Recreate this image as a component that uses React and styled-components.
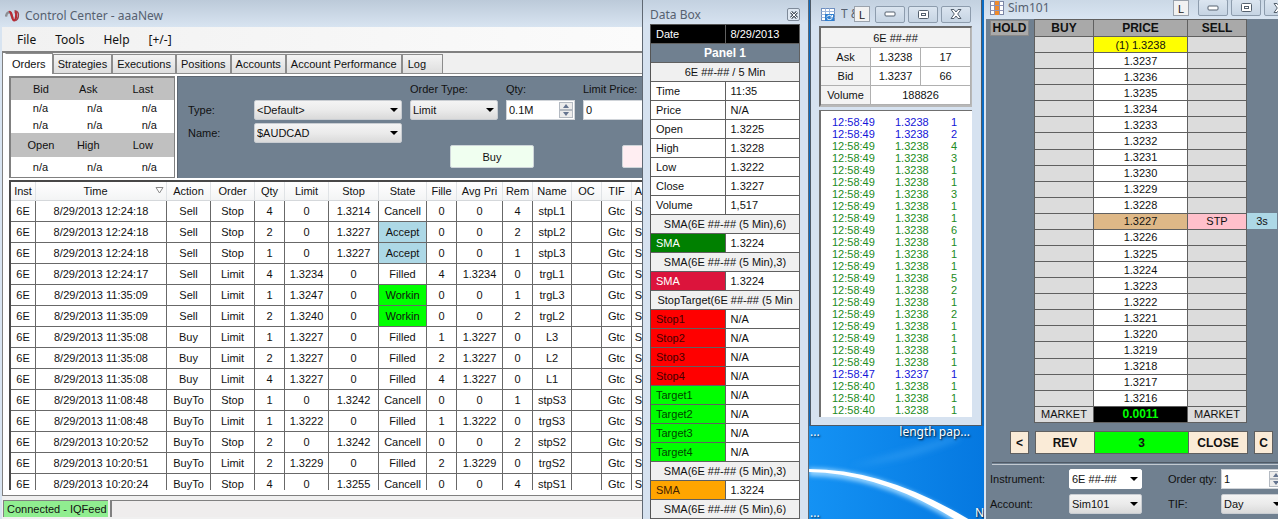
import styled, { createGlobalStyle } from "styled-components";

const columns = [
  ["Inst", 25],
  ["Time", 131],
  ["Action", 44],
  ["Order", 44],
  ["Qty", 30],
  ["Limit", 44],
  ["Stop", 50],
  ["State", 48],
  ["Fille", 30],
  ["Avg Pri", 46],
  ["Rem", 30],
  ["Name", 39],
  ["OC", 30],
  ["TIF", 30],
];

const orders = [
  ["12:24:18", "Sell", "Stop", "4", "0", "1.3214", "Cancell", "0", "0", "4", "stpL1"],
  ["12:24:18", "Sell", "Stop", "2", "0", "1.3227", "Accept", "0", "0", "2", "stpL2"],
  ["12:24:18", "Sell", "Stop", "1", "0", "1.3227", "Accept", "0", "0", "1", "stpL3"],
  ["12:24:17", "Sell", "Limit", "4", "1.3234", "0", "Filled", "4", "1.3234", "0", "trgL1"],
  ["11:35:09", "Sell", "Limit", "1", "1.3247", "0", "Workin", "0", "0", "1", "trgL3"],
  ["11:35:09", "Sell", "Limit", "2", "1.3240", "0", "Workin", "0", "0", "2", "trgL2"],
  ["11:35:08", "Buy", "Limit", "1", "1.3227", "0", "Filled", "1", "1.3227", "0", "L3"],
  ["11:35:08", "Buy", "Limit", "2", "1.3227", "0", "Filled", "2", "1.3227", "0", "L2"],
  ["11:35:08", "Buy", "Limit", "4", "1.3227", "0", "Filled", "4", "1.3227", "0", "L1"],
  ["11:08:48", "BuyTo", "Stop", "1", "0", "1.3242", "Cancell", "0", "0", "1", "stpS3"],
  ["11:08:48", "BuyTo", "Limit", "1", "1.3222", "0", "Filled", "1", "1.3222", "0", "trgS3"],
  ["10:20:52", "BuyTo", "Stop", "2", "0", "1.3242", "Cancell", "0", "0", "2", "stpS2"],
  ["10:20:51", "BuyTo", "Limit", "2", "1.3229", "0", "Filled", "2", "1.3229", "0", "trgS2"],
  ["10:20:24", "BuyTo", "Stop", "4", "0", "1.3255", "Cancell", "0", "0", "4", "stpS1"],
];

const stateColors = { Accept: "#add8e6", Workin: "#00ff00" };

const tabs = ["Strategies", "Executions", "Positions", "Accounts", "Account Performance"];

const dataRows = [
  { label: "Date", value: "8/29/2013", bg: "#000", color: "#fff", valueBg: "#000" },
  { title: "Panel 1", panel: true },
  { title: "6E ##-## / 5 Min" },
  { label: "Time", value: "11:35" },
  { label: "Price", value: "N/A" },
  { label: "Open", value: "1.3225" },
  { label: "High", value: "1.3228" },
  { label: "Low", value: "1.3222" },
  { label: "Close", value: "1.3227" },
  { label: "Volume", value: "1,517" },
  { title: "SMA(6E ##-## (5 Min),6)" },
  { label: "SMA", value: "1.3224", bg: "#008000", color: "#fff" },
  { title: "SMA(6E ##-## (5 Min),3)" },
  { label: "SMA", value: "1.3224", bg: "#dc143c", color: "#fff" },
  { title: "StopTarget(6E ##-## (5 Min" },
  { label: "Stop1", value: "N/A", bg: "#ff0000", color: "#400" },
  { label: "Stop2", value: "N/A", bg: "#ff0000", color: "#400" },
  { label: "Stop3", value: "N/A", bg: "#ff0000", color: "#400" },
  { label: "Stop4", value: "N/A", bg: "#ff0000", color: "#400" },
  { label: "Target1", value: "N/A", bg: "#00ff00", color: "#040" },
  { label: "Target2", value: "N/A", bg: "#00ff00", color: "#040" },
  { label: "Target3", value: "N/A", bg: "#00ff00", color: "#040" },
  { label: "Target4", value: "N/A", bg: "#00ff00", color: "#040" },
  { title: "SMA(6E ##-## (5 Min),3)" },
  { label: "SMA", value: "1.3224", bg: "#ffa500", color: "#420" },
  { title: "SMA(6E ##-## (5 Min),6)" },
];

const sizes = [1, 2, 4, 3, 1, 1, 3, 1, 1, 6, 1, 1, 1, 5, 2, 1, 2, 1, 1, 1, 1, 1, 1, 1, 1];
const prints = sizes.map((size, i) => ({
  time: i < 21 ? "12:58:49" : i === 21 ? "12:58:47" : "12:58:40",
  price: i === 21 ? "1.3237" : "1.3238",
  size,
  bid: i < 2 || i === 21,
}));

const ladder = Array.from({ length: 23 }, (_, i) => (1.3238 - i / 10000).toFixed(4));

const Logo = () => (
  <svg width="15" height="14" viewBox="0 0 15 14" fill="none">
    <path d="M1 7.5C1.5 3 5 1.500 6.300 5.500L7.600 9.500" stroke="#8d8f94" strokeWidth="2.400" />
    <path d="M4 3C5.800 2.200 6.400 5 7.200 8C8.200 12.500 10.300 12.500 11 8C11.400 5 11 3 9.800 2.600" stroke="#b92a35" strokeWidth="2.200" />
    <path d="M9.500 2C12.500 1.500 14 4.500 13.300 7.500C13 9.500 12 11 10.500 11.500" stroke="#9c3f48" strokeWidth="1.500" />
  </svg>
);

const TapeIcon = () => (
  <svg width="14" height="15" viewBox="0 0 14 15">
    <rect x="0.500" y="1.500" width="13" height="12" fill="#fff" stroke="#6f8fc0" />
    <path d="M0.500 4.500H13.500M0.500 7.500H13.500M0.500 10.500H13.500M4.500 1.500V13.500M8.500 1.500V13.500" stroke="#9db6dc" />
    <path d="M4 7H13V14H4Z" fill="#2f7fd0" />
    <path d="M5.500 10C7 8 10 8 11 9.500M11.500 11C10 13 7 13 6 11.500M11.500 8V10H9.500" stroke="#fff" fill="none" />
  </svg>
);

const LadderIcon = () => (
  <svg width="14" height="14" viewBox="0 0 14 14">
    <rect x="0.500" y="0.500" width="13" height="13" fill="#fff" stroke="#7b86a5" />
    <rect x="5" y="0" width="4" height="14" fill="#ef8b2c" />
    <path d="M0.500 4.500H13.500M0.500 9.500H13.500M4.500 0V14M9.500 0V14" stroke="#8e93b5" fill="none" />
  </svg>
);

const MinIcon = () => (
  <svg width="12" height="6" viewBox="0 0 12 6">
    <rect x="1" y="1" width="10" height="4" rx="1" fill="#fff" stroke="#54606e" />
  </svg>
);

const MaxIcon = () => (
  <svg width="11" height="9" viewBox="0 0 11 9">
    <rect x="0.500" y="0.500" width="10" height="8" rx="1" fill="#fff" stroke="#54606e" />
    <rect x="3.500" y="3.500" width="4" height="2" fill="#fff" stroke="#54606e" />
  </svg>
);

const CloseIcon = () => (
  <svg width="12" height="10" viewBox="0 0 12 10">
    <path
      d="M1 0.500H4L6 3L8 0.500H11L7.700 5L11 9.500H8L6 7L4 9.500H1L4.300 5Z"
      fill="#fff"
      stroke="#54606e"
    />
  </svg>
);

const Stepper = ({ name }) => (
  <StepButtons>
    <StepButton aria-label={`${name} up`}>
      <svg width="6" height="4" viewBox="0 0 6 4">
        <path d="M0 4L3 0L6 4Z" fill="#64748f" />
      </svg>
    </StepButton>
    <StepButton aria-label={`${name} down`}>
      <svg width="6" height="4" viewBox="0 0 6 4">
        <path d="M0 0L3 4L6 0Z" fill="#64748f" />
      </svg>
    </StepButton>
  </StepButtons>
);

const Combo = ({ id, value, flat }) => (
  <ComboBox $flat={flat}>
    <select id={id} defaultValue={value}>
      <option>{value}</option>
    </select>
    <svg width="8" height="4" viewBox="0 0 8 4">
      <path d="M0 0H8L4 4Z" fill="#000" />
    </svg>
  </ComboBox>
);

const WindowButtons = () => (
  <>
    <CaptionButton aria-label="Minimize">
      <MinIcon />
    </CaptionButton>
    <CaptionButton aria-label="Maximize">
      <MaxIcon />
    </CaptionButton>
    <CaptionButton aria-label="Close">
      <CloseIcon />
    </CaptionButton>
  </>
);

const ControlCenter = () => (
  <ControlWindow>
    <ControlTitle>
      <Logo />
      <span>Control Center - aaaNew</span>
    </ControlTitle>
    <MenuBar>
      <MenuButton>File</MenuButton>
      <MenuButton>Tools</MenuButton>
      <MenuButton>Help</MenuButton>
      <MenuButton>[+/-]</MenuButton>
    </MenuBar>
    <ControlBody>
      <TabStrip role="tablist">
        <Tab role="tab" $active>
          Orders
        </Tab>
        {tabs.map((name) => (
          <Tab role="tab" key={name}>
            {name}
          </Tab>
        ))}
        <Tab role="tab" $wide>
          Log
        </Tab>
      </TabStrip>
      <EntryRow>
        <QuoteTable>
          <thead>
            <tr>
              <th>Bid</th>
              <th>Ask</th>
              <th>Last</th>
            </tr>
          </thead>
          <tbody>
            <QuoteRow $h={16}>
              <td>n/a</td>
              <td>n/a</td>
              <td>n/a</td>
            </QuoteRow>
            <QuoteRow $h={16}>
              <td>n/a</td>
              <td>n/a</td>
              <td>n/a</td>
            </QuoteRow>
            <tr>
              <th>Open</th>
              <th>High</th>
              <th>Low</th>
            </tr>
            <QuoteRow $h={20}>
              <td>n/a</td>
              <td>n/a</td>
              <td>n/a</td>
            </QuoteRow>
          </tbody>
        </QuoteTable>
        <OrderEntry>
          <EntryFields>
            <i />
            <i />
            <label htmlFor="orderType">Order Type:</label>
            <label htmlFor="qty">Qty:</label>
            <label htmlFor="limitPrice">Limit Price:</label>
            <label htmlFor="type">Type:</label>
            <Combo id="type" value="<Default>" />
            <Combo id="orderType" value="Limit" />
            <NumberBox>
              <input id="qty" defaultValue="0.1M" />
              <Stepper name="Qty" />
            </NumberBox>
            <NumberBox>
              <input id="limitPrice" defaultValue="0" />
            </NumberBox>
            <label htmlFor="name">Name:</label>
            <Combo id="name" value="$AUDCAD" />
          </EntryFields>
          <TradeButtons>
            <TradeButton $bg="#f0fff0">Buy</TradeButton>
            <TradeButton $bg="#ffeef2" aria-label="Sell" />
          </TradeButtons>
        </OrderEntry>
      </EntryRow>
      <GridFrame>
        <OrderGrid>
          <colgroup>
            {columns.map(([name, width]) => (
              <col key={name} width={width} />
            ))}
            <col />
          </colgroup>
          <thead>
            <tr>
              {columns.map(([name]) => (
                <th key={name}>
                  {name === "Time" && (
                    <SortMark width="9" height="7" viewBox="0 0 9 7">
                      <path d="M1 0.500H8L4.500 6Z" fill="#fff" stroke="#888" />
                    </SortMark>
                  )}
                  {name}
                </th>
              ))}
              <LastHead>A</LastHead>
            </tr>
          </thead>
          <tbody>
            {orders.map((row) => (
              <tr key={row[10] + row[0]}>
                <td>6E</td>
                <td>8/29/2013 {row[0]}</td>
                {row.slice(1).map((cell, i) => (
                  <Cell key={i} $bg={i === 5 ? stateColors[cell] : undefined}>
                    {cell}
                  </Cell>
                ))}
                <td />
                <td>Gtc</td>
                <LastCell>S</LastCell>
              </tr>
            ))}
          </tbody>
        </OrderGrid>
      </GridFrame>
    </ControlBody>
    <StatusBar>
      <Connected>Connected - IQFeed</Connected>
      <StatusRest />
    </StatusBar>
  </ControlWindow>
);

const DataBox = () => (
  <DataWindow>
    <DataTitle>
      <span>Data Box</span>
      <SmallClose aria-label="Close data box">
        <svg width="8" height="8" viewBox="0 0 8 8">
          <path d="M1 1L7 7M7 1L1 7" stroke="#4c5663" strokeWidth="3" />
          <path d="M1 1L7 7M7 1L1 7" stroke="#fff" strokeWidth="1" />
        </svg>
      </SmallClose>
    </DataTitle>
    <DataTable>
      <tbody>
        {dataRows.map((row, i) =>
          row.title ? (
            <tr key={i}>
              <DataHeading colSpan={2} $panel={row.panel}>
                {row.title}
              </DataHeading>
            </tr>
          ) : (
            <tr key={i}>
              <DataCell $bg={row.bg} $color={row.color}>
                {row.label}
              </DataCell>
              <DataCell $bg={row.valueBg} $color={row.valueBg && row.color}>
                {row.value}
              </DataCell>
            </tr>
          )
        )}
      </tbody>
    </DataTable>
  </DataWindow>
);

const TimeAndSales = () => (
  <TapeWindow>
    <TapeTitle>
      <TapeIcon />
      <span>T &amp;</span>
      <LinkButton>L</LinkButton>
      <WindowButtons />
    </TapeTitle>
    <TapeQuote>
      <tbody>
        <tr>
          <th colSpan={3}>6E ##-##</th>
        </tr>
        <tr>
          <th>Ask</th>
          <td>1.3238</td>
          <td>17</td>
        </tr>
        <tr>
          <th>Bid</th>
          <td>1.3237</td>
          <td>66</td>
        </tr>
        <tr>
          <th>Volume</th>
          <td colSpan={2}>188826</td>
        </tr>
      </tbody>
    </TapeQuote>
    <TapeList>
      {prints.map((p, i) => (
        <Print key={i} $bid={p.bid}>
          <span>{p.time}</span>
          <span>{p.price}</span>
          <span>{p.size}</span>
        </Print>
      ))}
    </TapeList>
  </TapeWindow>
);

const Wallpaper = () => (
  <Desk>
    <svg width="100%" height="100%" viewBox="0 0 175 93" preserveAspectRatio="none">
      <defs>
        <filter id="glow" x="-10%" y="-30%" width="120%" height="160%">
          <feGaussianBlur stdDeviation="2" />
        </filter>
        <filter id="haze" x="-10%" y="-30%" width="120%" height="160%">
          <feGaussianBlur stdDeviation="3" />
        </filter>
      </defs>
      <path d="M40 40C80 30 115 18 150 8V14C120 26 90 36 40 40Z" fill="#4fb0fa" opacity="0.35" filter="url(#haze)" />
      <path d="M0 46C55 46 110 68 162 102" stroke="#8fd0ff" strokeWidth="8" fill="none" filter="url(#glow)" />
      <path d="M0 45C55 46 110 68 158 100L164 97C110 64 55 44 0 44Z" fill="#fff" stroke="#fff" strokeWidth="2" />
    </svg>
    <DeskLabels>
      <span>...</span>
      <DeskName>length pap...</DeskName>
      <span>...</span>
      <DeskEnd>N</DeskEnd>
    </DeskLabels>
  </Desk>
);

const Dom = () => (
  <DomWindow>
    <DomTitle>
      <LadderIcon />
      <DomName>Sim101</DomName>
      <LinkButton>L</LinkButton>
      <DomCaption>
        <WindowButtons />
      </DomCaption>
    </DomTitle>
    <DomBody>
      <LadderRow>
        <HoldButton>HOLD</HoldButton>
        <Ladder>
          <colgroup>
            <col width="59" />
            <col width="94" />
            <col width="59" />
            <col width="31" />
          </colgroup>
          <thead>
            <tr>
              <th>BUY</th>
              <th>PRICE</th>
              <th>SELL</th>
              <Outside />
            </tr>
          </thead>
          <tbody>
            {ladder.map((price, i) => {
              const entry = price === "1.3227";
              return (
                <tr key={price}>
                  <td />
                  <LadderCell $bg={i === 0 ? "#ffff00" : entry ? "#deb887" : "#fff"}>
                    {i === 0 ? `(1) ${price}` : price}
                  </LadderCell>
                  {entry ? <LadderCell $bg="#ffc0cb">STP</LadderCell> : <td />}
                  <Outside $bg={entry ? "#add8e6" : undefined}>{entry && "3s"}</Outside>
                </tr>
              );
            })}
            <tr>
              <td>MARKET</td>
              <Profit>0.0011</Profit>
              <td>MARKET</td>
              <Outside />
            </tr>
          </tbody>
        </Ladder>
      </LadderRow>
      <ActionRow>
        <ActionButton $w={19}>&lt;</ActionButton>
        <ActionGroup>
          <ActionButton $w={60}>REV</ActionButton>
          <ActionButton $w={95} $bg="#00ff00">
            3
          </ActionButton>
          <ActionButton $w={60}>CLOSE</ActionButton>
        </ActionGroup>
        <ActionButton $w={19}>C</ActionButton>
      </ActionRow>
      <Divider />
      <DomFields>
        <label htmlFor="instrument">Instrument:</label>
        <Combo id="instrument" value="6E ##-##" flat />
        <label htmlFor="orderQty">Order qty:</label>
        <NumberBox>
          <input id="orderQty" defaultValue="1" />
          <Stepper name="Order qty" />
        </NumberBox>
        <label htmlFor="account">Account:</label>
        <Combo id="account" value="Sim101" />
        <label htmlFor="tif">TIF:</label>
        <Combo id="tif" value="Day" />
      </DomFields>
    </DomBody>
  </DomWindow>
);

const App = () => (
  <>
    <GlobalStyle />
    <Desktop>
      <ControlCenter />
      <DataBox />
      <DeskColumn>
        <TimeAndSales />
        <Wallpaper />
      </DeskColumn>
      <Dom />
    </Desktop>
  </>
);

const GlobalStyle = createGlobalStyle`
  * {
    box-sizing: border-box;
  }

  body {
    margin: 0;
    overflow: hidden;
    background: #0a84e8;
    color: #111;
    font-family: "Liberation Sans", Arial, sans-serif;
    font-size: 11px;
  }

  button,
  input,
  select {
    font: inherit;
    color: inherit;
    margin: 0;
    padding: 0;
    border: none;
    border-radius: 0;
    background: none;
    appearance: none;
    outline: none;
  }

  table {
    border-collapse: collapse;
    table-layout: fixed;
  }

  th,
  td {
    padding: 0;
    font-weight: normal;
    text-align: center;
    white-space: nowrap;
    overflow: hidden;
  }

  svg {
    display: block;
    flex-shrink: 0;
  }
`;

const Desktop = styled.main`
  display: grid;
  grid-template-columns: minmax(0, 1fr) 167px 175px 294px;
  grid-template-rows: minmax(0, 1fr);
  height: 100vh;
  overflow: hidden;
`;

const TitleBar = styled.header`
  display: flex;
  align-items: center;
  flex-shrink: 0;
  font-family: "Noto Sans", "Open Sans", sans-serif;
  font-size: 12px;
  line-height: 16px;
  color: #566170;
  white-space: nowrap;
`;

const ControlWindow = styled.section`
  display: flex;
  flex-direction: column;
  min-width: 0;
  overflow: hidden;
  padding-left: 2px;
  background: linear-gradient(#bccad9, #d8e4f1 27px);
`;

const ControlTitle = styled(TitleBar)`
  height: 27px;
  gap: 5px;
  padding: 5px 3px 0;
`;

const MenuBar = styled.nav`
  display: flex;
  flex-shrink: 0;
  gap: 19px;
  height: 24px;
  padding-left: 15px;
  background: linear-gradient(90deg, #f1f1f1, #fbfbfb);
`;

const MenuButton = styled.button`
  font-family: "Noto Sans", "Open Sans", sans-serif;
  font-size: 12px;
`;

const ControlBody = styled.div`
  display: flex;
  flex-direction: column;
  flex: 1;
  min-height: 0;
  border: solid #808080;
  border-width: 2px 0 1px 1px;
  background: #fff;
  padding: 0 0 5px 2px;
`;

const TabStrip = styled.div`
  display: flex;
  align-items: flex-end;
  flex-shrink: 0;
  height: 21px;
  margin-bottom: 2px;
  background: #f0f0f0;
  border-bottom: 1px solid #8c8c8c;
`;

const Tab = styled.button`
  height: ${(p) => (p.$active ? 21 : 19)}px;
  padding: ${(p) => (p.$wide ? "0 16px 0 5px" : p.$active ? "0 6px" : "0 4px")};
  margin-bottom: ${(p) => (p.$active ? -1 : 0)}px;
  border: 1px solid #8c8c8c;
  border-left-color: ${(p) => (p.$active ? "#fff" : "#8c8c8c")};
  border-bottom: none;
  background: ${(p) => (p.$active ? "#fff" : "linear-gradient(#f4f4f4, #dedede)")};
  font-size: 11px;
  white-space: nowrap;
`;

const EntryRow = styled.div`
  display: flex;
  flex-shrink: 0;
  gap: 2px;
  height: 102px;
  padding-left: 4px;
  background: #fff;
`;

const QuoteTable = styled.table`
  width: 166px;
  height: 102px;
  flex-shrink: 0;
  border: solid #808080;
  border-width: 2px 1px 1px 2px;

  th {
    height: 23px;
    background: #c0c0c0;
    padding-left: 6px;
  }

  th + th {
    padding: 0 8px 0 0;
  }

  td {
    padding-left: 5px;
  }
`;

const QuoteRow = styled.tr`
  height: ${(p) => p.$h}px;
`;

const OrderEntry = styled.div`
  flex: 1;
  min-width: 0;
  overflow: hidden;
  background: #708090;
  border-top: 1px solid #5c6672;
  border-left: 1px solid #5c6672;
  padding-left: 10px;
`;

const EntryFields = styled.div`
  display: grid;
  grid-template-columns: 58px 148px 88px 69px 90px;
  grid-template-rows: 23px 20px 25px;
  column-gap: 8px;
  align-items: center;

  label {
    white-space: nowrap;
  }
`;

const ComboBox = styled.div`
  display: grid;
  align-items: center;
  height: 20px;
  border: 1px solid ${(p) => (p.$flat ? "#fff" : "#c9cdd2")};
  border-radius: 2px;
  background: ${(p) => (p.$flat ? "#fff" : "linear-gradient(#f4f4f4, #ebebeb 50%, #dadada)")};

  select,
  svg {
    grid-area: 1 / 1;
  }

  select {
    width: 100%;
    height: 18px;
    padding: 0 0 0 2px;
  }

  svg {
    justify-self: end;
    margin-right: 3px;
    pointer-events: none;
  }
`;

const NumberBox = styled.div`
  display: flex;
  align-items: center;
  height: 20px;
  background: #fff;
  border: 1px solid #d0d4d9;
  padding: 1px;

  input {
    flex: 1;
    min-width: 0;
    height: 16px;
    padding: 0 1px;
  }
`;

const StepButtons = styled.div`
  display: flex;
  flex-direction: column;
  flex-shrink: 0;
  width: 14px;
`;

const StepButton = styled.button`
  display: grid;
  place-items: center;
  height: 8px;
  border: 1px solid #b4bac2;
  background: #ececec;
`;

const TradeButtons = styled.div`
  display: flex;
  gap: 88px;
  padding-left: 262px;
`;

const TradeButton = styled.button`
  flex-shrink: 0;
  width: 84px;
  height: 23px;
  border: 1px solid #cfd6da;
  border-radius: 2px;
  background: ${(p) => p.$bg};
`;

const GridFrame = styled.div`
  flex: 1;
  min-height: 0;
  overflow: hidden;
  margin: 2px 0 0 4px;
  border: solid #484848;
  border-width: 2px 0 0 2px;
`;

const OrderGrid = styled.table`
  width: 100%;
  border-collapse: separate;
  border-spacing: 0;

  th {
    height: 19px;
    background: linear-gradient(#fff, #f3f4f5);
    border-right: 1px solid #e0e3e6;
    border-bottom: 1px solid #d5d8db;
  }

  td {
    height: 21px;
    border-right: 1px solid #686868;
    border-bottom: 1px solid #686868;
  }

  th:last-child,
  td:last-child {
    border-right: none;
  }
`;

const SortMark = styled.svg`
  float: right;
  margin: 2px 2px 0 0;
`;

const Cell = styled.td`
  background: ${(p) => p.$bg || "#fff"};
`;

const LastHead = styled.th`
  && {
    text-align: right;
  }
`;

const LastCell = styled.td`
  && {
    text-align: right;
  }
`;

const StatusBar = styled.footer`
  display: flex;
  flex-shrink: 0;
  gap: 2px;
  height: 23px;
  padding: 4px 0 2px 1px;
  background: #f0f0f0;
`;

const Connected = styled.div`
  width: 105px;
  padding-left: 3px;
  border: solid #808080;
  border-width: 1px 0 0 1px;
  background: #90ee90;
  line-height: 16px;
`;

const StatusRest = styled.div`
  flex: 1;
  border: solid #808080;
  border-width: 1px 0 0 2px;
  background: #efeded;
`;

const DataWindow = styled.section`
  overflow: hidden;
  padding: 0 8px 0 7px;
  border: solid #5f6873;
  border-width: 0 1px;
  background: linear-gradient(#c3d1e0, #d6e2f0 24px);
`;

const DataTitle = styled(TitleBar)`
  justify-content: space-between;
  height: 24px;
  padding-top: 5px;
`;

const SmallClose = styled.button`
  display: grid;
  place-items: center;
  width: 13px;
  height: 13px;
  border: 1px solid #7e8a99;
  border-radius: 2px;
  background: #dfe8f2;
`;

const DataTable = styled.table`
  width: 100%;
  border-collapse: separate;
  border-spacing: 0;
  border: solid #555;
  border-width: 1px 0 0 1px;
`;

const DataCell = styled.td`
  height: 19px;
  padding-left: 5px;
  text-align: left;
  border-right: 1px solid #606060;
  border-bottom: 1px solid #606060;
  background: ${(p) => p.$bg || "#fff"};
  color: ${(p) => p.$color || "#111"};
`;

const DataHeading = styled.th`
  height: 19px;
  border-right: 1px solid #606060;
  border-bottom: 1px solid #606060;
  background: ${(p) => (p.$panel ? "#708090" : "#f0f0f0")};
  color: ${(p) => (p.$panel ? "#fff" : "#111")};
  font-weight: ${(p) => (p.$panel ? "bold" : "normal")};
  font-size: ${(p) => (p.$panel ? 12 : 11)}px;
`;

const DeskColumn = styled.div`
  display: flex;
  flex-direction: column;
  min-height: 0;
  background: #0b6cc4;
`;

const TapeWindow = styled.section`
  display: flex;
  flex-direction: column;
  margin: 0 2px 0 1px;
  padding: 0 9px 8px 8px;
  border: solid #4f5a66;
  border-width: 0 1px 1px;
  background: linear-gradient(#c3d1e0, #d6e2f0 26px);
`;

const LinkButton = styled.button`
  flex-shrink: 0;
  width: 16px;
  height: 16px;
  border: 1px solid #9aa2ac;
  background: #f2f2f2;
  color: #222;
  font-family: "Liberation Sans", Arial, sans-serif;
  font-size: 11px;
`;

const TapeTitle = styled(TitleBar)`
  height: 26px;
  gap: 3px;
  padding: 2px 0 0 2px;

  > span {
    width: 16px;
    margin-left: 3px;
    overflow: hidden;
  }

  ${LinkButton} {
    margin: 0 2px 0 -6px;
    z-index: 1;
  }
`;

const CaptionButton = styled.button`
  display: grid;
  place-items: center;
  flex-shrink: 0;
  width: 30px;
  height: 17px;
  border: 1px solid #8d9cad;
  border-radius: 2px;
  background: linear-gradient(#dbe5f0, #c6d4e3);
`;

const TapeQuote = styled.table`
  width: 100%;
  border-collapse: separate;
  border-spacing: 0;
  border: solid #6a6a6a;
  border-width: 2px 1px 2px 2px;
  border-right-color: #b8b8b8;
  border-bottom-color: #b8b8b8;

  th,
  td {
    height: 19px;
    border-right: 1px solid #b0b0b0;
    border-bottom: 1px solid #b0b0b0;
    background: #fff;
  }

  th {
    background: #f3f3f3;
  }

  tr:first-child th {
    height: 20px;
  }
`;

const TapeList = styled.div`
  margin-top: 3px;
  padding: 5px 0 1px;
  border: solid #707070;
  border-width: 1px 0 0 2px;
  background: #fff;
`;

const Print = styled.div`
  display: grid;
  grid-template-columns: 63px 56px 10px;
  padding-left: 11px;
  line-height: 12px;
  color: ${(p) => (p.$bid ? "#1414d8" : "#228b22")};
`;

const Desk = styled.div`
  display: grid;
  flex: 1;
  min-height: 0;
  overflow: hidden;
  background: linear-gradient(90deg, #1492f4, #0578e0);

  > * {
    grid-area: 1 / 1;
    min-height: 0;
  }
`;

const DeskLabels = styled.div`
  display: grid;
  grid-template-columns: auto auto;
  align-content: space-between;
  justify-content: space-between;
  z-index: 1;
  padding-left: 1px;
  font-family: "Noto Sans", "Open Sans", sans-serif;
  font-size: 12px;
  line-height: 12px;
  color: #fff;
  text-shadow: 1px 1px 2px #000;
`;

const DeskName = styled.span`
  padding-right: 14px;
`;

const DeskEnd = styled.span`
  text-align: right;
`;

const DomWindow = styled.section`
  display: flex;
  flex-direction: column;
  min-width: 0;
  overflow: hidden;
  padding-left: 2px;
  background: linear-gradient(#cbd8e6, #d9e5f2 19px);
`;

const DomTitle = styled(TitleBar)`
  height: 19px;
  gap: 4px;
  padding: 0 0 4px 4px;
`;

const DomName = styled.span`
  flex: 1;
`;

const DomCaption = styled.div`
  display: flex;
  gap: 3px;
  flex-shrink: 0;
  width: 80px;
  margin-left: 5px;
  overflow: hidden;
`;

const DomBody = styled.div`
  flex: 1;
  min-height: 0;
  background: #708090;
`;

const LadderRow = styled.div`
  display: flex;
  align-items: flex-start;
  gap: 5px;
  padding-left: 4px;
`;

const HoldButton = styled.button`
  width: 39px;
  height: 16px;
  margin-top: 1px;
  border: 1px solid #8a8a8a;
  background: #a9a9a9;
  font-size: 12px;
  font-weight: bold;
`;

const Ladder = styled.table`
  width: 243px;
  height: 404px;

  th {
    height: 17px;
    border: 1px solid #606060;
    background: #a9a9a9;
    font-size: 12px;
    font-weight: bold;
  }

  td {
    height: 16px;
    border: 1px solid #606060;
    background: #dcdcdc;
    line-height: 12px;
  }
`;

const LadderCell = styled.td`
  && {
    background: ${(p) => p.$bg};
  }
`;

const Profit = styled.td`
  && {
    background: #000;
    color: #00ff00;
    font-size: 12px;
    font-weight: bold;
  }
`;

const Outside = styled.td`
  && {
    border: none;
    background: ${(p) => p.$bg || "transparent"};
  }
`;

const ActionRow = styled.div`
  display: flex;
  gap: 6px;
  padding: 8px 0 0 24px;
`;

const ActionGroup = styled.div`
  display: flex;

  > * + * {
    margin-left: -1px;
  }
`;

const ActionButton = styled.button`
  width: ${(p) => p.$w}px;
  height: 23px;
  border: 1px solid #606060;
  background: ${(p) => p.$bg || "#faebd7"};
  font-size: 12px;
  font-weight: bold;
`;

const Divider = styled.hr`
  margin: 8px 0 4px 6px;
  border: solid;
  border-width: 1px 0;
  border-color: #505a66 transparent #c3cad2;
  height: 3px;
`;

const DomFields = styled.div`
  display: grid;
  grid-template-columns: 79px 73px 26px 53px 64px;
  row-gap: 5px;
  align-items: center;
  padding-left: 4px;

  label {
    white-space: nowrap;
  }

  label:nth-of-type(even) {
    grid-column: 4;
  }
`;

export default App;
